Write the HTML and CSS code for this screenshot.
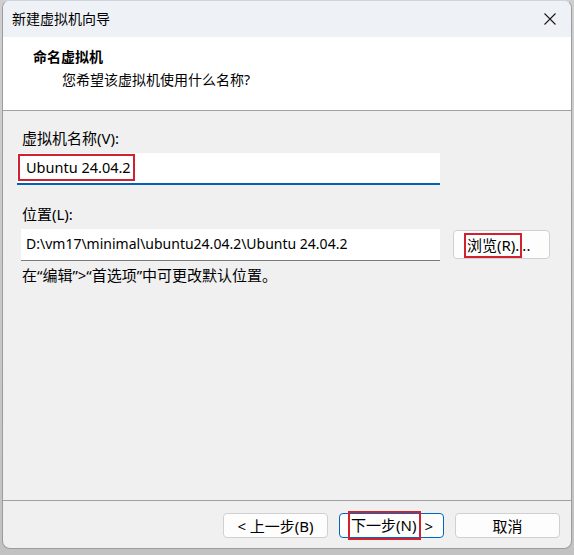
FILE: index.html
```html
<!DOCTYPE html>
<html lang="zh-CN">
<head>
<meta charset="utf-8">
<title>新建虚拟机向导</title>
<link rel="stylesheet" href="styles.css">
</head>
<body>
<div class="window">
  <div class="titlebar">
    <span class="title">新建虚拟机向导</span>
    <svg class="close" width="12" height="12" viewBox="0 0 12 12"><path d="M0.5 0.5 L11.5 11.5 M11.5 0.5 L0.5 11.5" stroke="#1a1a1a" stroke-width="1.1" fill="none"/></svg>
  </div>
  <div class="header">
    <div class="h-title">命名虚拟机</div>
    <div class="h-sub">您希望该虚拟机使用什么名称?</div>
  </div>
  <div class="content">
    <div class="label first">虚拟机名称(V):</div>
    <div class="name-input"><span class="mark name-mark">Ubuntu 24.04.2</span></div>
    <div class="label second">位置(L):</div>
    <div class="loc-row">
      <div class="loc-input">D:\vm17\minimal\ubuntu24.04.2\Ubuntu 24.04.2</div>
      <div class="btn browse"><span class="mark browse-mark">浏览(R).</span>..</div>
    </div>
    <div class="hint">在“编辑”&gt;“首选项”中可更改默认位置。</div>
  </div>
  <div class="footer">
    <div class="btn fbtn">&lt; 上一步(B)</div>
    <div class="btn fbtn primary"><span class="mark next-mark">下一步(N)</span> &gt;</div>
    <div class="btn fbtn">取消</div>
  </div>
</div>
</body>
</html>
```

FILE: styles.css
```css
* { box-sizing: border-box; }
html, body { margin: 0; padding: 0; }
body {
  width: 574px;
  height: 555px;
  background: linear-gradient(#cfcfcf, #c2c2c2);
  font-family: "Noto Sans", "Noto Sans CJK SC", sans-serif;
  font-size: 14px;
  color: #000;
  overflow: hidden;
}
.window {
  margin-left: 2px;
  width: 570px;
  height: 549px;
  border: 1px solid #9c9c9c;
  border-top-color: #cfd4da;
  border-radius: 8px;
  background: #f0f0f0;
  overflow: hidden;
  display: flex;
  flex-direction: column;
}
.titlebar {
  height: 36px;
  background: #eef2f7;
  display: flex;
  align-items: center;
  justify-content: space-between;
  padding: 0 15px 0 9px;
}
.title { font-size: 14px; line-height: 18px; }
.close { display: block; }
.header {
  height: 74px;
  background: #fff;
  border-bottom: 1px solid #a0a0a0;
  padding: 11px 0 0 30px;
}
.h-title { font-weight: bold; line-height: 18px; }
.h-sub { line-height: 18px; margin-top: 5px; padding-left: 29px; }
.content {
  flex: 1;
  padding: 18px 0 0 19px;
  border-bottom: 1px solid #a0a0a0;
  font-size: 15px;
}
.label { line-height: 18px; }
.name-input {
  margin: 6px 0 0 -5px;
  width: 423px;
  height: 32px;
  background: #fff;
  border-bottom: 2px solid #0061b8;
  padding: 1px 0 0 1px;
  font-size: 14.5px;
}
.mark {
  display: inline-block;
  border: 2px solid #d1202e;
  white-space: nowrap;
}
.name-mark {
  height: 27px;
  line-height: 23px;
  padding: 0 2px 0 6px;
}
.second { margin-top: 20px; }
.loc-row {
  display: flex;
  align-items: flex-start;
  margin-top: 6px;
}
.loc-input {
  margin-left: -1px;
  width: 419px;
  height: 32px;
  background: #fff;
  border-bottom: 1px solid #7a7a7a;
  line-height: 30px;
  padding-left: 5px;
  font-size: 14px;
  white-space: nowrap;
}
.btn {
  background: #fdfdfd;
  border: 1px solid #d0d0d0;
  border-radius: 4px;
  display: flex;
  align-items: center;
  justify-content: center;
  line-height: 18px;
  white-space: nowrap;
}
.browse {
  margin: 1px 0 0 13px;
  width: 97px;
  height: 29px;
  justify-content: flex-start;
  padding-left: 10px;
}
.browse-mark {
  height: 25px;
  line-height: 21px;
  padding: 0 1px 0 1px;
  margin-top: 1px;
}
.hint {
  margin-top: 5px;
  line-height: 18px;
}
.footer {
  height: 47px;
  display: flex;
  justify-content: flex-end;
  align-items: flex-start;
  gap: 11px;
  padding: 12px 11px 0 0;
  font-size: 15px;
}
.fbtn {
  width: 105px;
  height: 25px;
}
.primary { border-color: #0067c0; justify-content: flex-start; padding-left: 8px; }
.next-mark {
  height: 29px;
  line-height: 25px;
  padding: 0 3px 0 1px;
  margin: 0 3px 0 0;
}
```
